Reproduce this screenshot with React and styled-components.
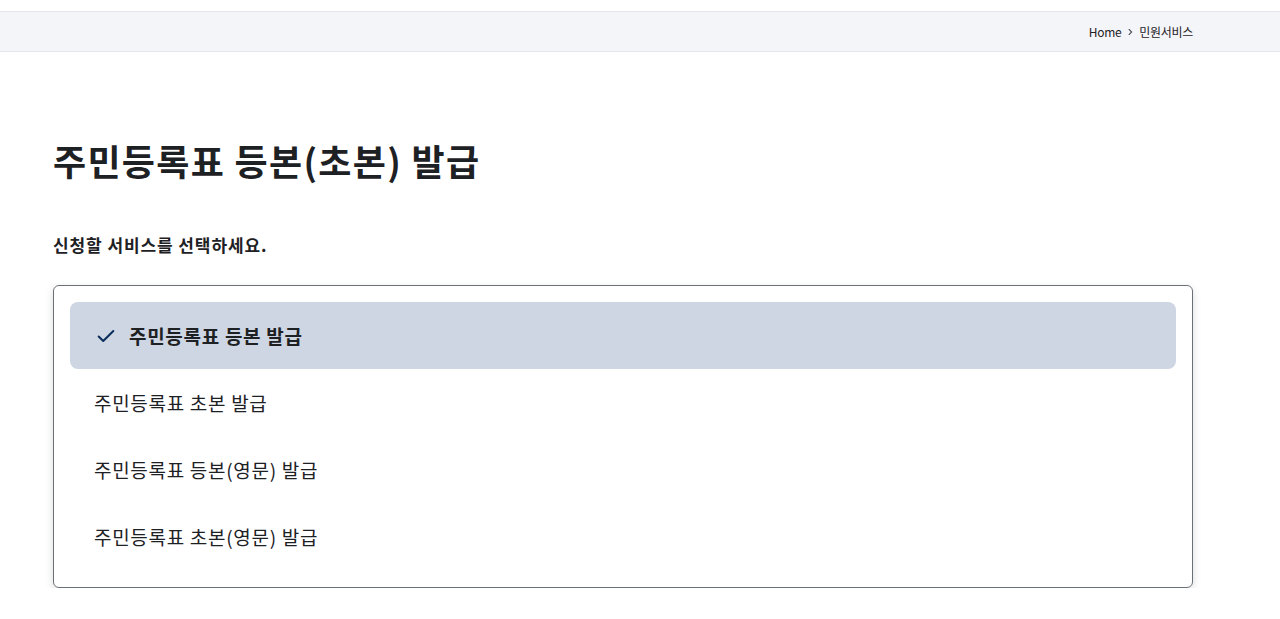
import React, { useState } from "react"
import styled, { createGlobalStyle } from "styled-components"

const GlobalStyle = createGlobalStyle`
  body {
    margin: 0;
    background: #ffffff;
    font-family: "Noto Sans CJK KR", "Noto Sans", sans-serif;
    color: #1e2124;
  }
`

const Page = styled.div`
  padding-top: 11px;
`

const TopBar = styled.div`
  height: 39px;
  background: #f4f5f9;
  border-top: 1px solid #e3e5ea;
  border-bottom: 1px solid #e3e5ea;
`

const Inner = styled.div`
  width: 1140px;
  margin: 0 auto 0 53px;
  box-sizing: border-box;
`

const Crumbs = styled.nav`
  height: 100%;
  display: flex;
  align-items: center;
  justify-content: flex-end;
  gap: 5px;
  font-size: 12px;
  letter-spacing: -0.3px;
  color: #1e2124;
`

const Title = styled.h1`
  margin: 82px 0 0;
  font-size: 36px;
  line-height: 52px;
  font-weight: 700;
  letter-spacing: 1.3px;
`

const Lead = styled.p`
  margin: 46px 0 0;
  font-size: 17px;
  line-height: 26px;
  font-weight: 700;
  letter-spacing: 0.9px;
`

const OptionBox = styled.div`
  margin-top: 27px;
  padding: 16px 16px 17px;
  border: 1px solid #6b6f76;
  border-radius: 6px;
  box-shadow: 0 3px 8px rgba(0, 0, 0, 0.14);
  display: flex;
  flex-direction: column;
`

const OptionItem = styled.button`
  all: unset;
  box-sizing: border-box;
  height: 67px;
  display: flex;
  align-items: center;
  gap: 12px;
  padding-left: ${p => (p.$selected ? "25px" : "24px")};
  border-radius: 8px;
  background: ${p => (p.$selected ? "#cdd6e2" : "transparent")};
  font-family: "Noto Sans CJK KR", "Noto Sans", sans-serif;
  font-size: 19px;
  font-weight: ${p => (p.$selected ? 700 : 400)};
  letter-spacing: 0.7px;
  color: #1e2124;
  cursor: pointer;
`

const Check = () => (
  <svg width="22" height="22" viewBox="0 0 24 24" fill="none">
    <path d="M4 12.5l5 5L20 6.5" stroke="#0b2e5c" strokeWidth="2.2" strokeLinecap="round" strokeLinejoin="round" />
  </svg>
)

const Chevron = () => (
  <svg width="8" height="10" viewBox="0 0 8 10" fill="none">
    <path d="M2.8 2.2L5.6 5L2.8 7.8" stroke="#464c53" strokeWidth="1.1" />
  </svg>
)

const options = [
  "주민등록표 등본 발급",
  "주민등록표 초본 발급",
  "주민등록표 등본(영문) 발급",
  "주민등록표 초본(영문) 발급",
]

export default function App() {
  const [selected, setSelected] = useState(0)
  return (
    <Page>
      <GlobalStyle />
      <TopBar>
        <Inner style={{ height: "100%" }}>
          <Crumbs>
            <span>Home</span>
            <Chevron />
            <span>민원서비스</span>
          </Crumbs>
        </Inner>
      </TopBar>
      <Inner>
        <Title>주민등록표 등본(초본) 발급</Title>
        <Lead>신청할 서비스를 선택하세요.</Lead>
        <OptionBox>
          {options.map((o, i) => (
            <OptionItem key={o} $selected={i === selected} onClick={() => setSelected(i)}>
              {i === selected && <Check />}
              {o}
            </OptionItem>
          ))}
        </OptionBox>
      </Inner>
    </Page>
  )
}
